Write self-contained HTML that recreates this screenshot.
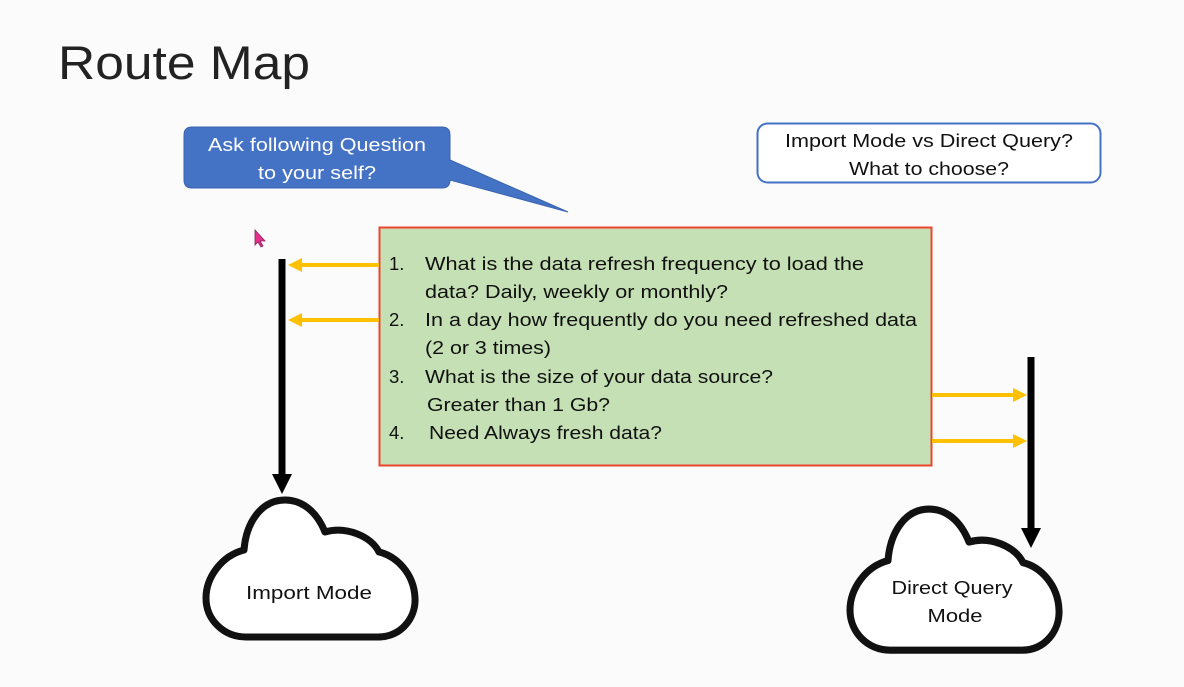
<!DOCTYPE html>
<html><head><meta charset="utf-8"><style>
html,body{margin:0;padding:0;background:#fbfbfb;}
svg{display:block}
text{font-family:"Liberation Sans",sans-serif;}
</style></head><body>
<svg width="1184" height="687" viewBox="0 0 1184 687" xmlns="http://www.w3.org/2000/svg">
<rect width="1184" height="687" fill="#fbfbfb"/>
<text x="58" y="79" font-size="47" fill="#222" textLength="252" lengthAdjust="spacingAndGlyphs">Route Map</text>

<path d="M192,127 H442 Q450,127 450,135 V160 L568,212 L450,180 Q450,188 442,188 H192 Q184,188 184,180 V135 Q184,127 192,127 Z" fill="#4472c4" stroke="#3a64b0" stroke-width="1"/>
<text x="317" y="151" font-size="18.5" fill="#fff" text-anchor="middle" textLength="218" lengthAdjust="spacingAndGlyphs">Ask following Question</text>
<text x="317" y="179" font-size="18.5" fill="#fff" text-anchor="middle" textLength="118" lengthAdjust="spacingAndGlyphs">to your self?</text>

<rect x="757.5" y="123.5" width="343" height="59" rx="10" fill="#fff" stroke="#4472c4" stroke-width="2"/>
<text x="929" y="147" font-size="18.5" fill="#111" text-anchor="middle" textLength="288" lengthAdjust="spacingAndGlyphs">Import Mode vs Direct Query?</text>
<text x="929" y="175" font-size="18.5" fill="#111" text-anchor="middle" textLength="160" lengthAdjust="spacingAndGlyphs">What to choose?</text>

<path d="M255,230 L255,245 L258,242 L261,247 L263,246 L260,241 L265,241 Z" fill="#e8308a" stroke="#802060" stroke-width="0.8"/>

<rect x="379.5" y="227.5" width="552" height="238" fill="#c5e0b4" stroke="#e8472e" stroke-width="2"/>
<g font-size="18.5" fill="#111">
<text x="389" y="270">1.</text><text x="425" y="270" textLength="439" lengthAdjust="spacingAndGlyphs">What is the data refresh frequency to load the</text>
<text x="425" y="298" textLength="303" lengthAdjust="spacingAndGlyphs">data? Daily, weekly or monthly?</text>
<text x="389" y="326">2.</text><text x="425" y="326" textLength="492" lengthAdjust="spacingAndGlyphs">In a day how frequently do you need refreshed data</text>
<text x="425" y="354" textLength="126" lengthAdjust="spacingAndGlyphs">(2 or 3 times)</text>
<text x="389" y="383">3.</text><text x="425" y="383" textLength="348" lengthAdjust="spacingAndGlyphs">What is the size of your data source?</text>
<text x="427" y="411" textLength="183" lengthAdjust="spacingAndGlyphs">Greater than 1 Gb?</text>
<text x="389" y="439">4.</text><text x="429" y="439" textLength="233" lengthAdjust="spacingAndGlyphs">Need Always fresh data?</text>
</g>

<line x1="282" y1="259" x2="282" y2="476" stroke="#000" stroke-width="7"/>
<polygon points="272,474 292,474 282,494" fill="#000"/>
<line x1="379" y1="265" x2="300" y2="265" stroke="#ffc000" stroke-width="4"/>
<polygon points="288,265 302,258 302,272" fill="#ffc000"/>
<line x1="379" y1="320" x2="300" y2="320" stroke="#ffc000" stroke-width="4"/>
<polygon points="288,320 302,313 302,327" fill="#ffc000"/>

<line x1="1031" y1="357" x2="1031" y2="530" stroke="#000" stroke-width="7"/>
<polygon points="1021,528 1041,528 1031,548" fill="#000"/>
<line x1="932" y1="395" x2="1014" y2="395" stroke="#ffc000" stroke-width="4"/>
<polygon points="1027,395 1013,388 1013,402" fill="#ffc000"/>
<line x1="932" y1="441" x2="1014" y2="441" stroke="#ffc000" stroke-width="4"/>
<polygon points="1027,441 1013,434 1013,448" fill="#ffc000"/>

<g fill="#fff" stroke="#111" stroke-width="7" stroke-linejoin="round">
<path transform="translate(206,498)" d="M40,139 H172 C195,139 210,120 209,100 C208,75 190,58 173,54 C165,38 140,28 119,34 C110,12 95,2 79,2 C55,2 40,25 38,52 C15,58 0,80 0,100 C0,122 18,139 40,139 Z"/>
<path transform="translate(850,507) scale(1,1.03)" d="M40,139 H172 C195,139 210,120 209,100 C208,75 190,58 173,54 C165,38 140,28 119,34 C110,12 95,2 79,2 C55,2 40,25 38,52 C15,58 0,80 0,100 C0,122 18,139 40,139 Z"/>
</g>
<text x="309" y="599" font-size="18.5" fill="#111" text-anchor="middle" textLength="126" lengthAdjust="spacingAndGlyphs">Import Mode</text>
<text x="952" y="594" font-size="18.5" fill="#111" text-anchor="middle" textLength="121" lengthAdjust="spacingAndGlyphs">Direct Query</text>
<text x="955" y="622" font-size="18.5" fill="#111" text-anchor="middle" textLength="55" lengthAdjust="spacingAndGlyphs">Mode</text>
</svg>
</body></html>
